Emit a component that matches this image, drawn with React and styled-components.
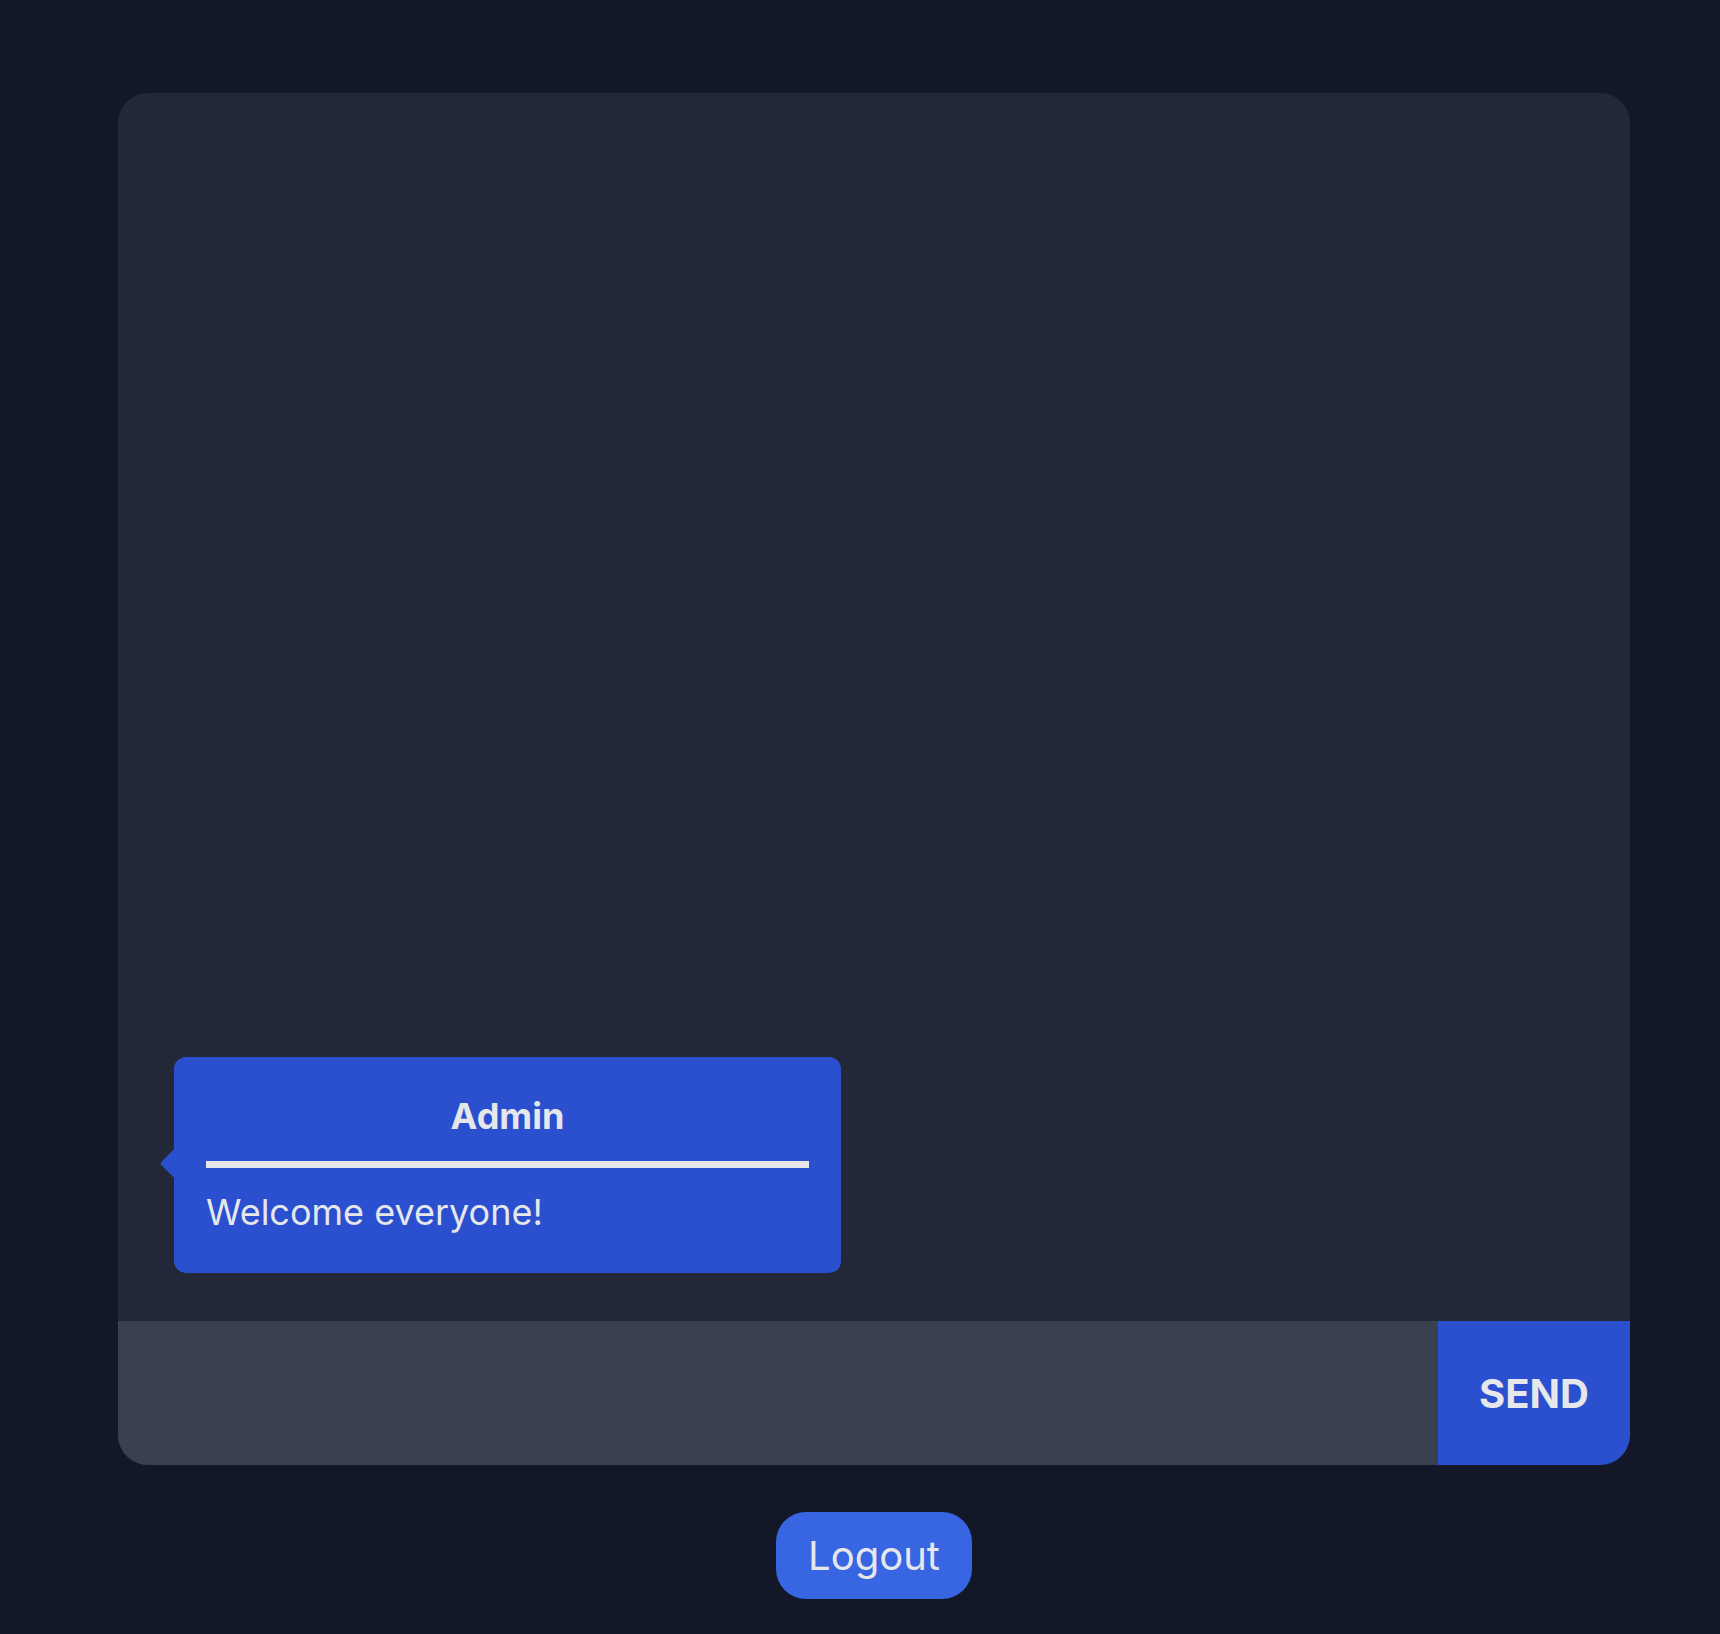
import React from 'react'
import styled, { createGlobalStyle } from "styled-components";

const GlobalStyle = createGlobalStyle`
  html, body {
    margin: 0;
    padding: 0;
    background: #121827;
    font-family: Inter, "Noto Sans", sans-serif;
    color: #e5e7eb;
  }
`;

const messages = [
  { id: 1, author: "Admin", text: "Welcome everyone!" },
];

export default function App() {
  return (
    <Page>
      <GlobalStyle />
      <Chat>
        <Messages>
          {messages.map((m) => (
            <Bubble key={m.id}>
              <Author>{m.author}</Author>
              <Divider />
              <Text>{m.text}</Text>
            </Bubble>
          ))}
        </Messages>
        <Composer>
          <Input type="text" />
          <SendButton>SEND</SendButton>
        </Composer>
      </Chat>
      <LogoutButton>Logout</LogoutButton>
    </Page>
  );
}

const Page = styled.div`
  min-height: 1634px;
  box-sizing: border-box;
  padding: 93px 90px 0 118px;
  display: flex;
  flex-direction: column;
  align-items: center;
  gap: 47px;
`;

const Chat = styled.div`
  width: 100%;
  height: 1372px;
  background: #222837;
  border-radius: 30px;
  overflow: hidden;
  display: flex;
  flex-direction: column;
`;

const Messages = styled.div`
  flex: 1;
  display: flex;
  flex-direction: column;
  justify-content: flex-end;
  align-items: flex-start;
  padding: 0 0 48px 56px;
`;

const Bubble = styled.div`
  position: relative;
  width: 667px;
  box-sizing: border-box;
  padding: 37px 32px 39px;
  background: #2a4fcf;
  border-radius: 12px;

  /* little pointer on the left edge */
  &::before {
    content: "";
    position: absolute;
    left: -10px;
    top: 50%;
    width: 21px;
    height: 21px;
    margin-top: -12px;
    background: #2a4fcf;
    border-radius: 3px;
    transform: rotate(45deg);
  }
`;

const Author = styled.div`
  font-size: 36px;
  font-weight: 700;
  text-align: center;
`;

const Divider = styled.div`
  height: 7px;
  background: #e5e7eb;
  margin: 23px 0 22px;
`;

const Text = styled.div`
  font-size: 36px;
`;

const Composer = styled.div`
  height: 144px;
  display: flex;
`;

const Input = styled.input`
  flex: 1;
  border: none;
  outline: none;
  background: #394050;
  color: #e5e7eb;
  font-family: inherit;
  font-size: 36px;
  padding: 0 32px;
`;

const SendButton = styled.button`
  width: 192px;
  border: none;
  background: #2a4fcf;
  color: #e5e7eb;
  font-family: inherit;
  font-size: 40px;
  font-weight: 700;
  cursor: pointer;
`;

const LogoutButton = styled.button`
  height: 87px;
  padding: 0 32px;
  border: none;
  border-radius: 30px;
  background: #3865e2;
  color: #e5e7eb;
  font-family: inherit;
  font-size: 40px;
  cursor: pointer;
`;
